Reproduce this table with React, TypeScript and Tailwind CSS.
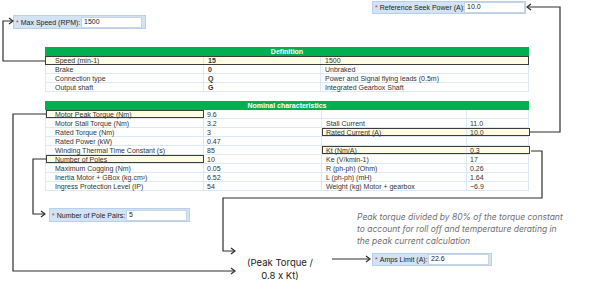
import React from "react";

type NomRow = { a: string; b: string; c: string; d: string; hl1?: boolean; hl34?: boolean };

const defRows = [
  { a: "Speed (min-1)", b: "15", c: "1500", hl: true },
  { a: "Brake", b: "0", c: "Unbraked" },
  { a: "Connection type", b: "Q", c: "Power and Signal flying leads (0.5m)" },
  { a: "Output shaft", b: "G", c: "Integrated Gearbox Shaft" },
];

const nomRows: NomRow[] = [
  { a: "Motor Peak Torque (Nm)", b: "9.6", c: "", d: "", hl1: true },
  { a: "Motor Stall Torque (Nm)", b: "3.2", c: "Stall Current", d: "11.0" },
  { a: "Rated Torque (Nm)", b: "3", c: "Rated Current (A)", d: "10.0", hl34: true },
  { a: "Rated Power (kW)", b: "0.47", c: "", d: "" },
  { a: "Winding Thermal Time Constant (s)", b: "85", c: "Kt (Nm/A)", d: "0.3", hl34: true },
  { a: "Number of Poles", b: "10", c: "Ke (V/kmin-1)", d: "17", hl1: true },
  { a: "Maximum Cogging (Nm)", b: "0.05", c: "R (ph-ph) (Ohm)", d: "0.26" },
  { a: "Inertia Motor + GBox (kg.cm²)", b: "6.52", c: "L (ph-ph) (mH)", d: "1.64" },
  { a: "Ingress Protection Level (IP)", b: "54", c: "Weight (kg) Motor + gearbox", d: "~6.9" },
];

const HL = "bg-[#fffce4] outline outline-[1.5px] outline-[#3c3c3c] -outline-offset-1 relative z-10";

function FormBox({ label, value, className, inputClass }: { label: string; value: string; className: string; inputClass: string }) {
  return (
    <div
      className={`absolute flex items-center bg-[#d3e3f6] border border-[#b9d0ec] text-[7px] text-[#222] font-['Liberation_Sans',Arial,sans-serif] ${className}`}
    >
      <span className="text-[#e0302a] ml-[2px] mr-[2px] leading-none">*</span>
      <span className="leading-none whitespace-nowrap">{label}</span>
      <div className={`absolute bg-white border border-[#c8d4e0] h-[11px] flex items-center pl-[2px] text-[7px] ${inputClass}`}>
        {value}
      </div>
    </div>
  );
}

function Arrow({ x, y, dir }: { x: number; y: number; dir: "r" | "l" }) {
  const d = dir === "r" ? `M${x - 4},${y - 3} L${x},${y} L${x - 4},${y + 3}` : `M${x + 4},${y - 3} L${x},${y} L${x + 4},${y + 3}`;
  return <path d={d} fill="none" stroke="#2e2e2e" strokeWidth={1.2} />;
}

export default function App() {
  return (
    <div className="relative w-[605px] h-[288px] bg-white overflow-hidden font-['Liberation_Sans',Arial,sans-serif]">
      {/* Tables */}
      <div className="pl-[45px] pt-[47px] w-[529px] text-[7px] text-[#333] leading-none">
        <div className="h-[9px] bg-[#00b050] text-white font-bold flex items-center justify-center">Definition</div>
        {defRows.map((r, i) => (
          <div
            key={i}
            className={`h-[9px] grid grid-cols-[158px_117px_209px] border-b border-l border-r border-[#dbe9f6] ${r.hl ? HL : ""}`}
          >
            <div className="pl-[9px] flex items-center border-r border-[#dbe9f6]">{r.a}</div>
            <div className="pl-[4px] flex items-center font-bold border-r border-[#dbe9f6]">{r.b}</div>
            <div className="pl-[4px] flex items-center">{r.c}</div>
          </div>
        ))}

        <div className="h-[9px] mt-[9px] bg-[#00b050] text-white font-bold flex items-center justify-center">
          Nominal characteristics
        </div>
        {nomRows.map((r, i) => (
          <div key={i} className="h-[9px] grid grid-cols-[158px_118px_208px] border-b border-l border-r border-[#dbe9f6]">
            <div className={`pl-[9px] flex items-center border-r border-[#dbe9f6] ${r.hl1 ? HL : ""}`}>{r.a}</div>
            <div className="pl-[3px] flex items-center border-r border-[#dbe9f6]">{r.b}</div>
            <div className={`grid grid-cols-[145px_63px] ${r.hl34 ? HL : ""}`}>
              <div className="pl-[4px] flex items-center border-r border-[#dbe9f6]">{r.c}</div>
              <div className="pl-[3px] flex items-center">{r.d}</div>
            </div>
          </div>
        ))}
      </div>

      {/* Form fields */}
      <FormBox label="Max Speed (RPM):" value="1500" className="left-[13px] top-[15px] w-[133px] h-[14px]" inputClass="left-[67px] top-[1px] w-[61px]" />
      <FormBox label="Reference Seek Power (A):" value="10.0" className="left-[372px] top-[1px] w-[154px] h-[13px]" inputClass="left-[91px] top-[0px] w-[61px]" />
      <FormBox label="Number of Pole Pairs:" value="5" className="left-[49px] top-[208px] w-[141px] h-[14px]" inputClass="left-[76px] top-[1px] w-[61px]" />
      <FormBox label="Amps Limit (A):" value="22.6" className="left-[372px] top-[253px] w-[120px] h-[13px]" inputClass="left-[55px] top-[0px] w-[61px]" />

      {/* Formula text */}
      <div className="absolute left-[240px] top-[256px] w-[80px] text-center text-[9.5px] leading-[13px] text-[#222] font-['Inter',sans-serif]">
        <div>(Peak Torque /</div>
        <div>0.8 x Kt)</div>
      </div>

      <div className="absolute left-[357px] top-[211px] text-[8.5px] leading-[12px] italic text-[#707070] font-['Inter',sans-serif] whitespace-nowrap">
        <div>Peak torque divided by 80% of the torque constant</div>
        <div>to account for roll off and temperature derating in</div>
        <div>the peak current calculation</div>
      </div>

      {/* Connectors */}
      <svg className="absolute left-0 top-0 pointer-events-none" width={605} height={288} viewBox="0 0 605 288">
        <g fill="none" stroke="#2e2e2e" strokeWidth={1.2}>
          <path d="M47,61 H3 V21 H12" />
          <path d="M529,132 H560 V7 H528" />
          <path d="M47,114 H13 V271 H234" />
          <path d="M47,159 H33 V214 H44" />
          <path d="M531,151 H542 V198 H223 V251 H234" />
          <path d="M332,259 H369" />
        </g>
        <Arrow x={13} y={21} dir="r" />
        <Arrow x={527} y={7} dir="l" />
        <Arrow x={235} y={271} dir="r" />
        <Arrow x={45} y={214} dir="r" />
        <Arrow x={235} y={251} dir="r" />
        <Arrow x={370} y={259} dir="r" />
      </svg>
    </div>
  );
}
